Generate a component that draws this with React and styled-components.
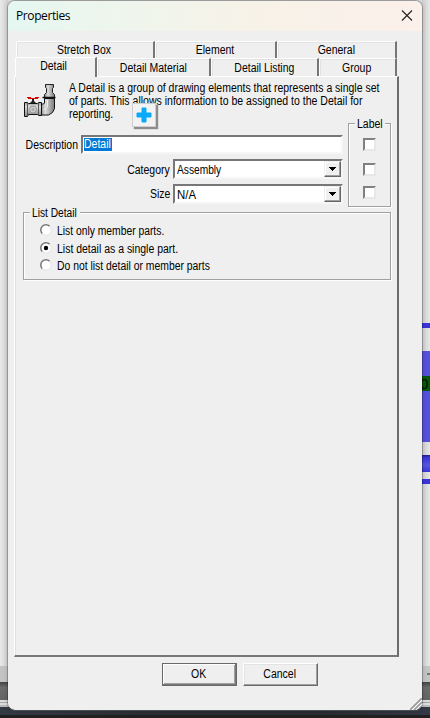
import React from 'react';
import styled, { createGlobalStyle, css } from 'styled-components';

const Global = createGlobalStyle`
  * { box-sizing: border-box; }
  body { margin: 0; overflow: hidden; font: 12px/13px "Liberation Sans", Arial, sans-serif; color: #000; }
`;

const Desktop = styled.div`
  position: relative;
  width: 430px;
  height: 718px;
  display: flex;
  flex-direction: column;
  background: #24272d;
`;
const Workspace = styled.div`
  height: 666px;
  display: flex;
  justify-content: space-between;
  background: #dedede;
`;
const LeftEdge = styled.div`
  width: 8px;
  background: linear-gradient(90deg, #e9e9e9, #d2d2d2);
`;
const Drawing = styled.div`
  width: 8px;
  padding-top: 323px;
  background: linear-gradient(90deg, #cfcfcf, #e6e6e6);
`;
const Band = styled.div`
  height: ${p => p.$h}px;
  flex: none;
  background: ${p => p.$bg};
`;
const Glyph = styled.div`
  height: 15px;
  background: #06590a;
  color: #001000;
  font: 15px/15px "Liberation Sans", sans-serif;
  text-indent: -2px;
`;
const Scroll = styled.div`
  height: 16px;
  background: #c4c4c4;
  display: flex;
  justify-content: flex-end;
  align-items: center;
`;
const Dash = styled.div`
  width: 3px;
  height: 2px;
  background: #777;
`;

const Dialog = styled.section`
  position: absolute;
  left: 7px;
  top: 0;
  width: 416px;
  height: 711px;
  border: 1px solid rgba(0, 0, 0, 0.24);
  border-bottom-color: #4a4f55;
  border-radius: 8px;
  background: #efefef;
  background-clip: padding-box;
  overflow: hidden;
  box-shadow: 0 0 5px rgba(0, 0, 0, 0.14);
`;
const TitleBar = styled.header`
  height: 30px;
  display: flex;
  justify-content: space-between;
  padding: 7px 9px 0 8px;
  background: linear-gradient(90deg, #e5f7f1 0%, #eff5ec 30%, #f7f2e8 60%, #fbf0ea 100%);
`;
const Title = styled.span`
  font: 12px/15px "Open Sans", "Noto Sans", sans-serif;
  letter-spacing: -0.4px;
`;
/* Condensed dialog face: the glyphs are narrowed toward the side they are aligned to. */
const Text = styled.span`
  display: inline-block;
  flex: none;
  white-space: nowrap;
  padding: ${p => p.$pad ?? 0};
  transform: scaleX(${p => p.$sx ?? 0.873});
  transform-origin: ${p => p.$from ?? 'left'};
`;
const Tabs = styled.div`
  display: flex;
  margin-left: ${p => p.$x}px;
  height: ${p => p.$h}px;
  align-items: flex-end;
`;
const Tab = styled.div`
  width: ${p => p.$w}px;
  height: 100%;
  padding: ${p => p.$pt ?? 3}px 1px 0 0;
  text-align: center;
  border: 1px solid #fff;
  border-width: 1px 2px 0 1px;
  border-right-color: #767676;
  border-top-left-radius: 2px;
  background: #efefef;
  box-shadow: inset 1px 1px #e2e2e2;
  ${p => p.$active && css`
    position: relative;
    z-index: 1;
    height: 20px;
    margin-bottom: -1px;
    box-shadow: none;
  `}
`;
const Panel = styled.main`
  width: 385px;
  height: 581px;
  margin-left: 6px;
  padding: 5px 6px 0 8px;
  border: 1px solid #fff;
  border-right: 2px solid #6c6c6c;
  border-bottom: 2px solid #777;
  box-shadow: inset 1px 0 #e0e0e0;
`;
const Intro = styled.div`
  display: flex;
  height: 37px;
`;
const PipeIcon = styled.svg`
  width: 34px;
  height: 34px;
  margin: 2px 12px 0 0;
  flex: none;
`;
const Copy = styled.div`
  display: flex;
  flex-direction: column;
  align-items: flex-start;
  width: 312px;
`;
const Form = styled.div`
  display: flex;
  height: 93px;
  justify-content: space-between;
`;
const Fields = styled.div`
  width: 320px;
  padding-top: 15px;
`;
const Field = styled.label`
  display: flex;
  justify-content: flex-end;
  align-items: flex-end;
  height: 20px;
  margin-bottom: 5px;
  gap: 3px;
`;
const sunken = css`
  border: 2px solid;
  border-color: #777 #f6f6f6 #f6f6f6 #777;
  background: #fff;
`;
const Input = styled.div`
  ${sunken}
  display: flex;
  flex: none;
  width: 262px;
  height: 19px;
  padding: 1px;
`;
const Selection = styled.span`
  display: flex;
  width: 28px;
  height: 13px;
  color: #fff;
  background: #0078d7;
`;
const Select = styled.div`
  ${sunken}
  flex: none;
  width: 170px;
  height: 20px;
  display: flex;
  justify-content: space-between;
  padding-left: 2px;
`;
const Arrow = styled.div`
  width: 17px;
  height: 16px;
  border: 1px solid;
  border-color: #eee #666 #666 #eee;
  background: #efefef;
  box-shadow: inset -1px -1px #a0a0a0, inset 1px 1px #fff;
  display: flex;
  justify-content: center;
  align-items: center;
`;
const Group = styled.fieldset`
  border: 1px solid #a0a0a0;
  box-shadow: 1px 1px #fff, inset 1px 1px #fff;
  margin: ${p => p.$mt ?? 0}px 0 0;
  padding: 0;
  min-width: 0;
  width: ${p => p.$w}px;
  height: ${p => p.$h}px;
`;
const Legend = styled.div`
  width: ${p => p.$w}px;
  height: 13px;
  margin: ${p => p.$m};
  padding-left: 2px;
  background: #efefef;
`;
const Checks = styled.div`
  display: flex;
  flex-direction: column;
  align-items: center;
  padding-top: 7px;
`;
const Check = styled.div`
  ${sunken}
  width: 13px;
  height: 13px;
  margin-bottom: ${p => p.$gap}px;
  border-color: #808080 #e7e7e7 #e7e7e7 #808080;
`;
const Option = styled.label`
  display: flex;
  align-items: flex-start;
  height: ${p => p.$h}px;
  padding-left: 16px;
  gap: 4px;
`;
const Buttons = styled.footer`
  display: flex;
  gap: 6px;
  padding: 6px 0 0 154px;
`;
const Button = styled.button`
  width: 75px;
  height: 23px;
  padding: 0 2px 1px 0;
  border: 1px solid;
  border-color: #fff #696969 #696969 #fff;
  box-shadow: inset -1px -1px #a0a0a0, inset 1px 1px #e3e3e3;
  background: #efefef;
  color: #000;
  font: inherit;
  ${p => p.$default && css`
    border-color: #696969;
    box-shadow: inset -1px -1px #777, inset 1px 1px #fff, inset -2px -2px #a0a0a0;
  `}
`;
const Grip = styled.svg`
  position: absolute;
  right: 0;
  bottom: 0;
`;
const DragBadge = styled.div`
  position: absolute;
  left: 132px;
  top: 103px;
  width: 24px;
  height: 24px;
  border: 1px solid #cfcfcf;
  background: #f2f2f2;
  box-shadow: 2px 2px 1px #8d8d8d;
`;

function Pipe() {
  return (
    <PipeIcon viewBox="0 0 34 34">
      <defs>
        <linearGradient id="v" x1="0" x2="0" y1="0" y2="1">
          <stop stopColor="#999" /><stop offset=".3" stopColor="#ddd" /><stop offset="1" stopColor="#858585" />
        </linearGradient>
        <linearGradient id="h">
          <stop stopColor="#888" /><stop offset=".35" stopColor="#ddd" /><stop offset="1" stopColor="#777" />
        </linearGradient>
      </defs>
      <path d="M22.5 .5h8v3l-1 1v4l2 2v4h-10v-4l2-2v-4l-1-1z" fill="url(#h)" stroke="#222" />
      <path d="M21.5 14.5h10v10l-2 4-4 2.5h-8v-11h3l1-1z" fill="url(#h)" stroke="#111" />
      <path d="M19.5 13.5h13" stroke="#111" strokeWidth="1.5" />
      <path d="M1.500 18.500h3l1 1h9l1-1h3v13h-3l-1-1h-9l-1 2h-3z" fill="url(#v)" stroke="#111" />
      <path d="M4.5 19v12M15.5 19v12" stroke="#555" fill="none" />
      <path d="M24.5 16v7l-4 3" stroke="#eee" fill="none" />
      <circle cx="10" cy="25.5" r="3.5" fill="#ccc" stroke="#999" />
      <circle cx="10" cy="25.5" r="1.5" fill="#aaa" />
      <path d="M7 19l2-2v-2h2v2l2 2z" fill="#222" />
      <path d="M4 13.5h4M5 14.5h10M12 13.5h4" stroke="#e80000" fill="none" />
    </PipeIcon>
  );
}

function Radio({ checked }) {
  return (
    <svg width="13" height="13" viewBox="0 0 13 13">
      <circle cx="6" cy="6" r="5" fill="#fff" />
      <path d="M2.3 9.7A5.2 5.2 0 0 1 9.7 2.3" fill="none" stroke="#777" strokeWidth="1.5" />
      <path d="M2.3 9.7A5.2 5.2 0 0 0 9.7 2.3" fill="none" stroke="#e5e5e5" />
      {checked && <circle cx="6" cy="6" r="2.2" />}
    </svg>
  );
}

function Dropdown({ value, pad, sx }) {
  return (
    <Select>
      <Text $pad={pad} $sx={sx}>{value}</Text>
      <Arrow><svg width="7" height="4" viewBox="0 0 7 4" shapeRendering="crispEdges"><path d="M0 0h7v1H0zM1 1h5v1H1zM2 2h3v1H2zM3 3h1v1H3z" /></svg></Arrow>
    </Select>
  );
}

export default function App() {
  return (
    <Desktop>
      <Global />
      <Workspace>
        <LeftEdge />
        <Drawing>
          <Band $h={5} $bg="#3935dc" />
          <Band $h={23} $bg="transparent" />
          <Band $h={25} $bg="#5551dc" />
          <Glyph>0</Glyph>
          <Band $h={51} $bg="#5551dc" />
          <Band $h={13} $bg="transparent" />
          <Band $h={17} $bg="linear-gradient(#202078, #3935dc 15%, #5955e0 60%, #3935dc)" />
          <Band $h={7} $bg="transparent" />
          <Band $h={5} $bg="#3935dc" />
        </Drawing>
      </Workspace>
      <Scroll><Dash /></Scroll>
      <Band $h={18} $bg="linear-gradient(#444, #6c6c6c 30%, #646464)" />
      <Band $h={7} $bg="linear-gradient(#ddd 0 2px, #aaa 2px 3px, #ddd 3px 5px, #bbb 5px)" />
      <Band $h={8} $bg="linear-gradient(90deg, #343a44, #292d32 40%, #292d32 75%, #333945)" />
      <Band $h={3} $bg="#202020" />

      <Dialog>
        <TitleBar>
          <Title>Properties</Title>
          <svg width="12" height="14" viewBox="0 0 12 14"><path d="M1 2.5l10 10M11 2.5l-10 10" stroke="#222" strokeWidth="1.1" /></svg>
        </TitleBar>
        <Band $h={10} $bg="transparent" />
        <Tabs $x={8} $h={17}>
          <Tab $w={139} $pt={2}><Text $from="center">Stretch Box</Text></Tab>
          <Tab $w={122} $pt={2}><Text $from="center">Element</Text></Tab>
          <Tab $w={120} $pt={2}><Text $from="center">General</Text></Tab>
        </Tabs>
        <Tabs $x={7} $h={18}>
          <Tab $w={82} $pt={2} $active><Text $from="center" $pad="0 3px 0 0">Detail</Text></Tab>
          <Tab $w={114}><Text $from="center">Detail Material</Text></Tab>
          <Tab $w={108}><Text $from="center">Detail Listing</Text></Tab>
          <Tab $w={78}><Text $from="center">Group</Text></Tab>
        </Tabs>
        <Panel>
          <Intro>
            <Pipe />
            <Copy>
              <Text>A Detail is a group of drawing elements that represents a single set</Text>
              <Text $sx={0.877}>of parts. This allows information to be assigned to the Detail for</Text>
              <Text>reporting.</Text>
            </Copy>
          </Intro>
          <Form>
            <Fields>
              <Field><Text $from="right" $pad="0 0 2px">Description</Text><Input><Selection><Text>Detail</Text></Selection></Input></Field>
              <Field><Text $from="right" $pad="0 0 2px">Category</Text><Dropdown value="Assembly" pad="3px 0 0" sx={0.85} /></Field>
              <Field><Text $from="right" $pad="0 0 3px">Size</Text><Dropdown value="N/A" pad="3px 0 0" sx={0.95} /></Field>
            </Fields>
            <Group $w={43} $h={84} $mt={4}>
              <Legend $w={30} $m="-6px auto 0"><Text>Label</Text></Legend>
              <Checks><Check $gap={12} /><Check $gap={10} /><Check $gap={0} /></Checks>
            </Group>
          </Form>
          <Group $w={368} $h={68}>
            <Legend $w={50} $m="-6px 0 4px 6px"><Text $sx={0.85}>List Detail</Text></Legend>
            <Option $h={18}><Radio /><Text $pad="1px 0 0" $sx={0.86}>List only member parts.</Text></Option>
            <Option $h={17}><Radio checked /><Text $pad="1px 0 0">List detail as a single part.</Text></Option>
            <Option $h={17}><Radio /><Text $pad="1px 0 0" $sx={0.865}>Do not list detail or member parts</Text></Option>
          </Group>
        </Panel>
        <Buttons>
          <Button $default><Text $from="center">OK</Text></Button>
          <Button><Text $from="center">Cancel</Text></Button>
        </Buttons>
        <Grip width="12" height="12" viewBox="0 0 12 12">
          <path d="M0 12L12 0M4 12l8-8M8 12l4-4" stroke="#999" strokeWidth="1.7" />
          <path d="M2 12L12 2M6 12l6-6" stroke="#fff" />
        </Grip>
      </Dialog>
      <DragBadge>
        <svg width="22" height="22" viewBox="0 0 22 22"><path d="M9 4h4v5h5v4h-5v5H9v-5H4V9h5z" fill="#0baaf8" stroke="#0baaf8" /></svg>
      </DragBadge>
    </Desktop>
  );
}
